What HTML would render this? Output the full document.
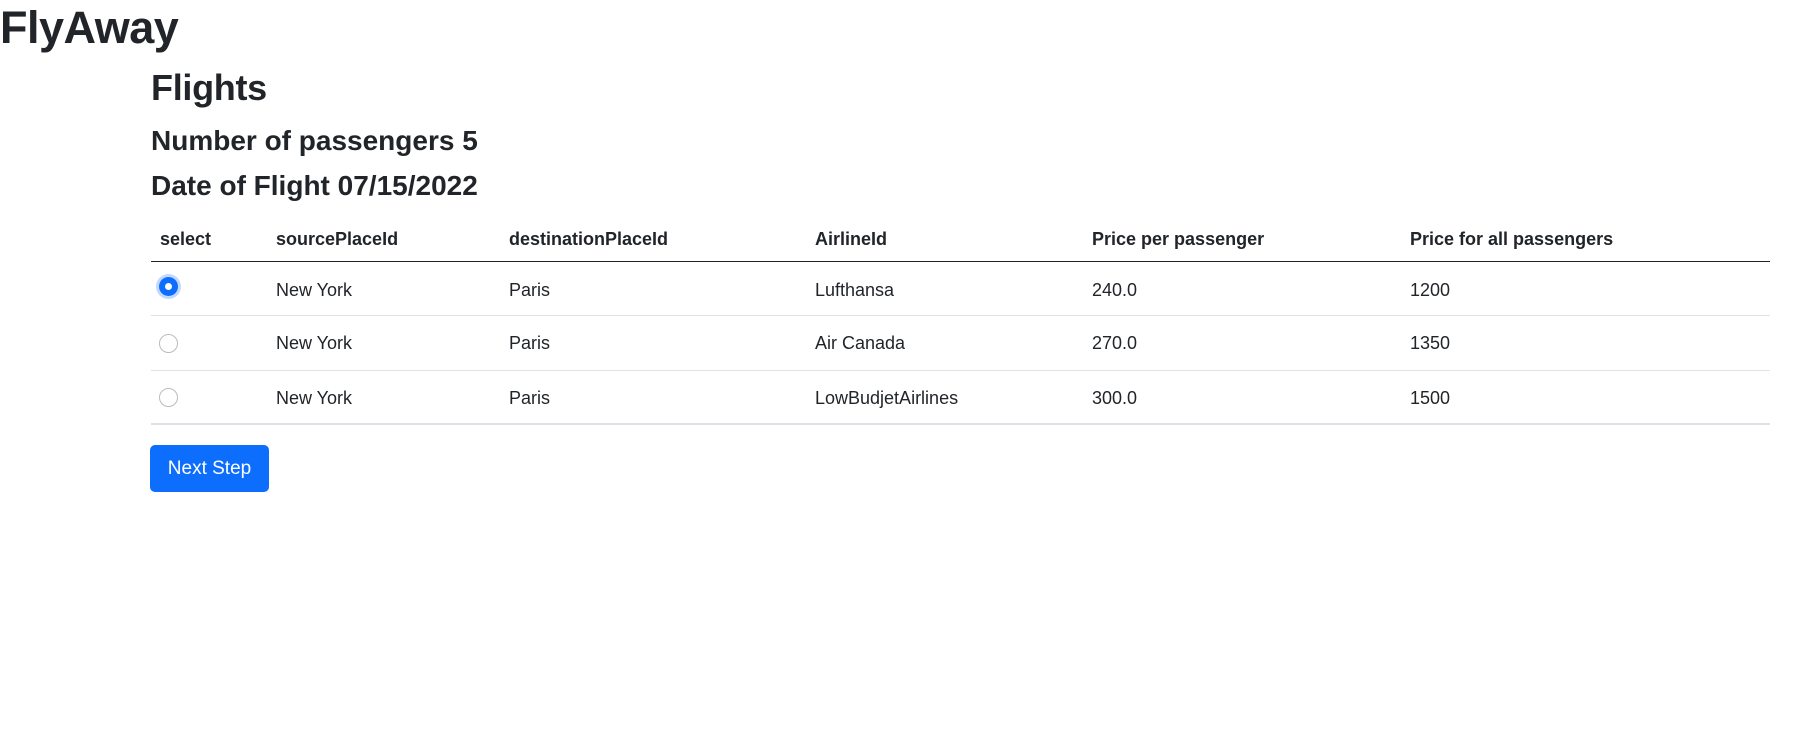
<!DOCTYPE html>
<html><head><style>
body{margin:0;width:1816px;height:733px;background:#fff;font-family:"Liberation Sans",sans-serif;color:#212529;position:relative;overflow:hidden}
.a{position:absolute;white-space:nowrap;margin:0}
h1.a{font-size:45px;font-weight:bold;left:0;top:2px;letter-spacing:-0.5px}
h2.a{font-size:36px;font-weight:bold;left:151px;top:67px;letter-spacing:-0.3px}
h3.a{font-size:28px;font-weight:bold;left:151px;}
.th{font-size:18px;font-weight:bold;top:229px}
.td{font-size:18px;}
.line{position:absolute;left:151px;width:1619px;height:1px;background:#dee2e6}
.r{position:absolute;width:17px;height:17px;border:1px solid #bbb;border-radius:50%;left:159px;background:#fff}
</style></head><body>
<h1 class="a">FlyAway</h1>
<h2 class="a">Flights</h2>
<h3 class="a" style="top:125px">Number of passengers 5</h3>
<h3 class="a" style="top:170px">Date of Flight 07/15/2022</h3>

<div class="a th" style="left:160px">select</div>
<div class="a th" style="left:276px">sourcePlaceId</div>
<div class="a th" style="left:509px">destinationPlaceId</div>
<div class="a th" style="left:815px">AirlineId</div>
<div class="a th" style="left:1092px">Price per passenger</div>
<div class="a th" style="left:1410px">Price for all passengers</div>
<div class="line" style="top:261px;background:#212529"></div>

<div style="position:absolute;left:156px;top:274px;width:25px;height:25px;border-radius:50%;background:#c2d9fd"></div>
<div style="position:absolute;left:159px;top:277px;width:19px;height:19px;border-radius:50%;background:#0d6efd"></div>
<div style="position:absolute;left:165px;top:283px;width:7px;height:7px;border-radius:50%;background:#fff"></div>
<div class="a td" style="left:276px;top:280px">New York</div>
<div class="a td" style="left:509px;top:280px">Paris</div>
<div class="a td" style="left:815px;top:280px">Lufthansa</div>
<div class="a td" style="left:1092px;top:280px">240.0</div>
<div class="a td" style="left:1410px;top:280px">1200</div>
<div class="line" style="top:315px"></div>

<div class="r" style="top:334px"></div>
<div class="a td" style="left:276px;top:333px">New York</div>
<div class="a td" style="left:509px;top:333px">Paris</div>
<div class="a td" style="left:815px;top:333px">Air Canada</div>
<div class="a td" style="left:1092px;top:333px">270.0</div>
<div class="a td" style="left:1410px;top:333px">1350</div>
<div class="line" style="top:370px"></div>

<div class="r" style="top:388px"></div>
<div class="a td" style="left:276px;top:388px">New York</div>
<div class="a td" style="left:509px;top:388px">Paris</div>
<div class="a td" style="left:815px;top:388px">LowBudjetAirlines</div>
<div class="a td" style="left:1092px;top:388px">300.0</div>
<div class="a td" style="left:1410px;top:388px">1500</div>
<div class="line" style="top:423px;height:2px"></div>

<div style="position:absolute;left:150px;top:445px;width:119px;height:47px;background:#0d6efd;border-radius:5px;color:#fff;font-size:19px;line-height:47px;text-align:center">Next Step</div>
</body></html>
